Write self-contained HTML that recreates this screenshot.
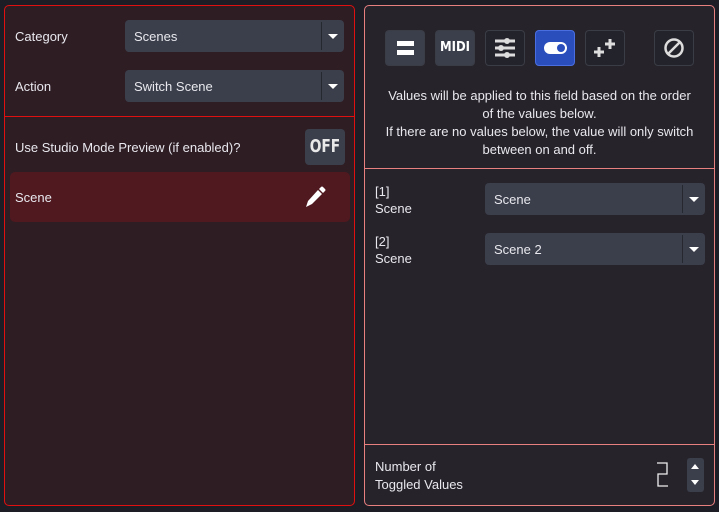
<!DOCTYPE html>
<html><head><style>
*{box-sizing:border-box;margin:0;padding:0}
body{width:719px;height:512px;background:#1d1e25;font-family:"Liberation Sans",sans-serif;font-size:13px;color:#e8e8ee;position:relative;overflow:hidden}
.a{position:absolute}
.lp{left:4px;top:5px;width:351px;height:501px;background:#2e1d23;border:1px solid #e01010;border-radius:5px}
.rp{left:364px;top:5px;width:351px;height:501px;background:#27232b;border:1px solid #e88080;border-radius:5px}
.dd{background:#3b3f4b;border-radius:4px;height:32px;line-height:33px;padding-left:9px}
.dd .sep{position:absolute;right:22px;top:2px;bottom:2px;width:1px;background:#262830}
.dd .ar{position:absolute;right:6px;top:14px;width:0;height:0;border-left:5px solid transparent;border-right:5px solid transparent;border-top:5px solid #fff}
.btn{top:30px;width:40px;height:36px;border-radius:4px;border:1px solid #3a3c46;background:#23232b}
</style></head><body>
<div class="a lp"></div>
<div class="a" style="left:15px;top:29px">Category</div>
<div class="a dd" style="left:125px;top:20px;width:219px">Scenes<div class="sep"></div><div class="ar"></div></div>
<div class="a" style="left:15px;top:79px">Action</div>
<div class="a dd" style="left:125px;top:70px;width:219px">Switch Scene<div class="sep"></div><div class="ar"></div></div>
<div class="a" style="left:5px;top:116px;width:349px;height:1px;background:#e01010"></div>
<div class="a" style="left:15px;top:140px">Use Studio Mode Preview (if enabled)?</div>
<div class="a" style="left:305px;top:129px;width:40px;height:36px;background:#3b3f4b;border-radius:4px;color:#e8e8e8;font-weight:bold;font-size:18px;text-align:center;line-height:36px;font-family:'DejaVu Sans Condensed','Liberation Sans',sans-serif"><span style="display:inline-block;transform:scaleX(0.85)">OFF</span></div>
<div class="a" style="left:10px;top:172px;width:340px;height:50px;background:#4f191f;border-radius:5px"></div>
<div class="a" style="left:15px;top:190px">Scene</div>
<svg class="a" style="left:304px;top:185px" width="22" height="24" viewBox="0 0 22 24"><path d="M2 22 L4 16 L14 5 L18 9 L8 19 Z" fill="#fff"/><path d="M15 4 L17 2 Q18 1 19 2 L21 4 Q22 5 21 6 L19 8 Z" fill="#fff"/></svg>

<div class="a rp"></div>
<div class="a btn" style="left:385px;background:#3b3f4b"><div class="a" style="left:11px;top:10px;width:17px;height:5px;background:#fff"></div><div class="a" style="left:11px;top:19px;width:17px;height:5px;background:#fff"></div></div>
<div class="a btn" style="left:435px;background:#3b3f4b;color:#fff;font-weight:bold;font-size:13px;text-align:center;line-height:34px;font-family:'DejaVu Sans Condensed',sans-serif">MIDI</div>
<div class="a btn" style="left:485px"><svg width="38" height="34"><g stroke="#ddd" stroke-width="3"><line x1="9" y1="10" x2="29" y2="10"/><line x1="9" y1="17" x2="29" y2="17"/><line x1="9" y1="24" x2="29" y2="24"/></g><circle cx="21" cy="10" r="3" fill="#ddd"/><circle cx="15" cy="17" r="3" fill="#ddd"/><circle cx="21" cy="24" r="3" fill="#ddd"/></svg></div>
<div class="a btn" style="left:535px;background:#2a4fbd;border-color:#4a6ee0"><svg width="38" height="34"><rect x="8" y="11" width="23" height="12" rx="6" fill="#fff"/><circle cx="25" cy="17" r="4" fill="#2a4fbd"/></svg></div>
<div class="a btn" style="left:585px"><svg width="38" height="34"><g stroke="#ddd" stroke-width="3"><line x1="8" y1="21" x2="18" y2="21"/><line x1="13" y1="16" x2="13" y2="26"/><line x1="19" y1="13" x2="29" y2="13"/><line x1="24" y1="8" x2="24" y2="18"/></g></svg></div>
<div class="a btn" style="left:654px"><svg width="38" height="34"><circle cx="19" cy="17" r="8.5" fill="none" stroke="#ddd" stroke-width="2.5"/><line x1="13" y1="23" x2="25" y2="11" stroke="#ddd" stroke-width="2.5"/></svg></div>
<div class="a" style="left:365px;top:87px;width:349px;text-align:center;line-height:18px">Values will be applied to this field based on the order<br>of the values below.<br>If there are no values below, the value will only switch<br>between on and off.</div>
<div class="a" style="left:365px;top:168px;width:349px;height:1px;background:#e88080"></div>
<div class="a" style="left:375px;top:183px;line-height:17px">[1]<br>Scene</div>
<div class="a dd" style="left:485px;top:183px;width:220px">Scene<div class="sep"></div><div class="ar"></div></div>
<div class="a" style="left:375px;top:233px;line-height:17px">[2]<br>Scene</div>
<div class="a dd" style="left:485px;top:233px;width:220px">Scene 2<div class="sep"></div><div class="ar"></div></div>
<div class="a" style="left:365px;top:444px;width:349px;height:1px;background:#e88080"></div>
<div class="a" style="left:375px;top:458px;line-height:18px">Number of<br>Toggled Values</div>
<svg class="a" style="left:656px;top:462px" width="14" height="26"><path d="M1 1 H11 V12 H2 V24 H12" fill="none" stroke="#eee" stroke-width="1.3"/></svg>
<div class="a" style="left:687px;top:458px;width:17px;height:34px;background:#3b3f4b;border-radius:3px"><div class="a" style="left:4px;top:6px;border-left:4px solid transparent;border-right:4px solid transparent;border-bottom:5px solid #fff"></div><div class="a" style="left:4px;top:22px;border-left:4px solid transparent;border-right:4px solid transparent;border-top:5px solid #fff"></div></div>
</body></html>
